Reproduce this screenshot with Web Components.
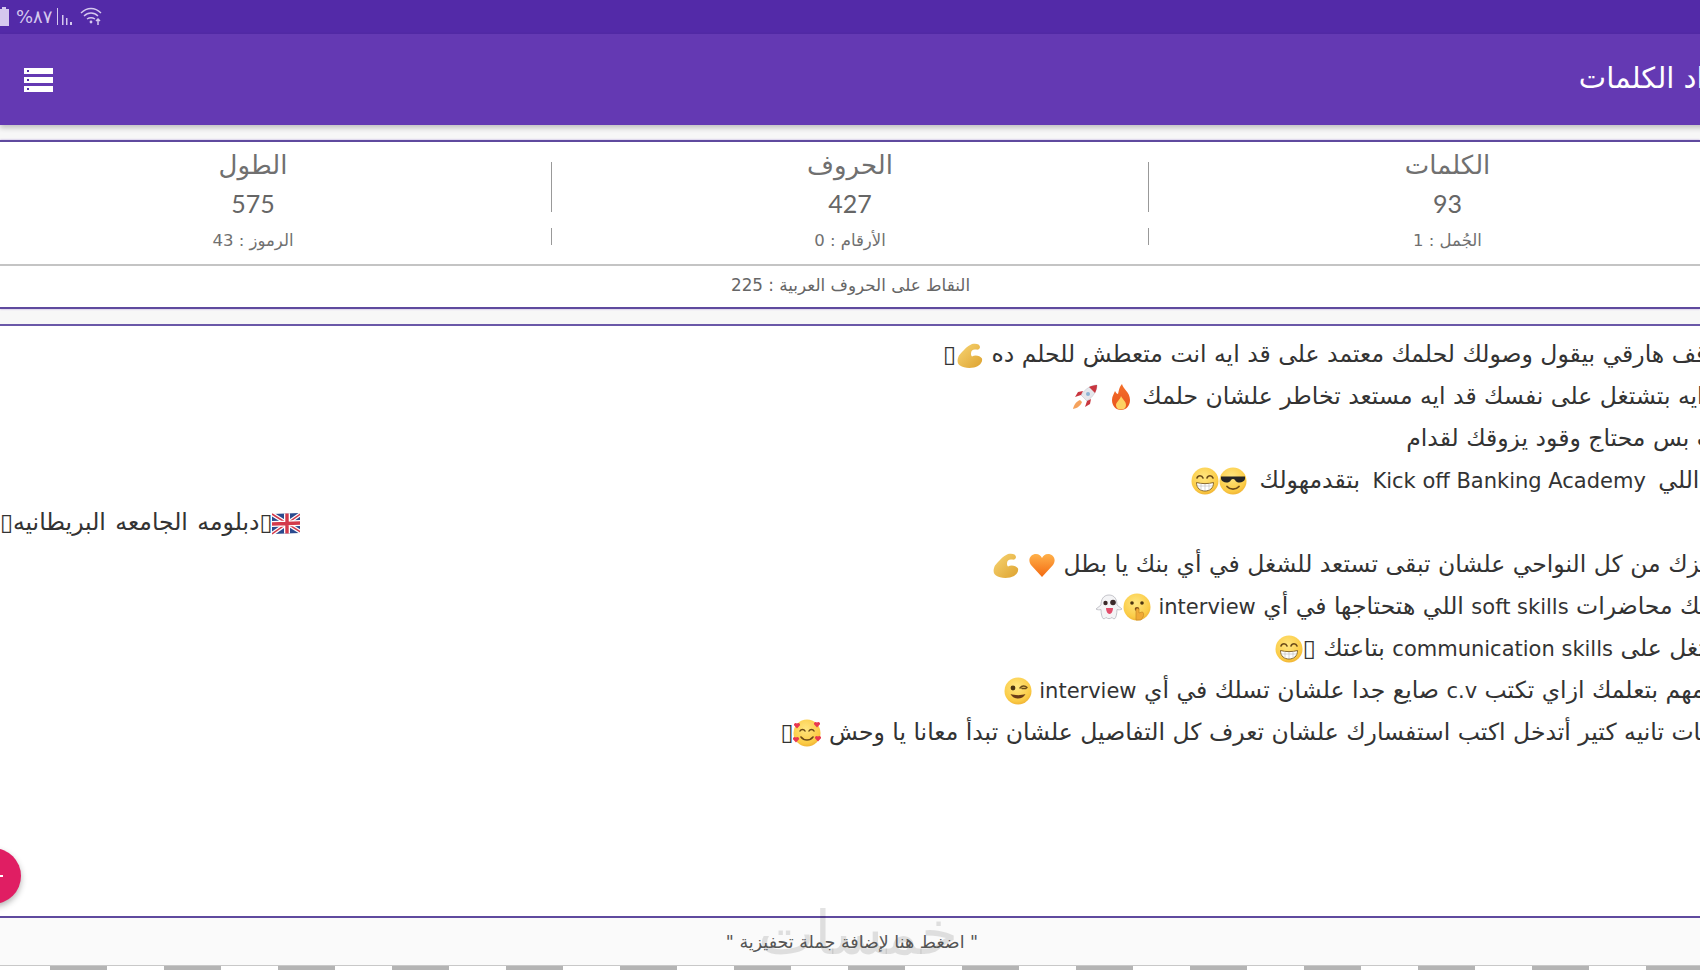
<!DOCTYPE html>
<html lang="ar">
<head>
<meta charset="utf-8">
<title>عداد الكلمات</title>
<style>
  html, body { margin: 0; padding: 0; background: #fff; }
  body { font-family: "DejaVu Sans", "Noto Sans", sans-serif; overflow: hidden; width: 1700px; height: 970px; }
</style>
</head>
<body>
<word-page>
  <status-bar slot="top"></status-bar>
  <app-bar slot="top">عداد الكلمات</app-bar>
  <stats-panel>
    <stat-cell title-text="الكلمات" value="93" sub="الجُمل : 1"></stat-cell>
    <stat-cell title-text="الحروف" value="427" sub="الأرقام : 0" divided></stat-cell>
    <stat-cell title-text="الطول" value="575" sub="الرموز : 43" divided></stat-cell>
    <span slot="dots">النقاط على الحروف العربية : 225</span>
  </stats-panel>
  <text-editor>
    <text-line style="--shift:14px">موقف هارقي بيقول وصولك لحلمك معتمد على قد ايه انت متعطش للحلم ده <app-emoji name="muscle"></app-emoji>▯</text-line>
    <text-line style="--shift:-3px">وقد ايه بتشتغل على نفسك قد ايه مستعد تخاطر علشان حلمك <app-emoji name="fire"></app-emoji> <app-emoji name="rocket"></app-emoji></text-line>
    <text-line style="--shift:13px">انت بس محتاج وقود يزوقك لقدام</text-line>
    <text-line style="--shift:-1px;word-spacing:5px">وده اللي <span>Kick off Banking Academy</span> بتقدمهولك <app-emoji name="cool"></app-emoji><app-emoji name="grin"></app-emoji></text-line>
    <text-line start style="word-spacing:2px"><app-emoji name="flag"></app-emoji>▯دبلومه الجامعه البريطانيه▯</text-line>
    <text-line>هنجهزك من كل النواحي علشان تبقى تستعد للشغل في أي بنك يا بطل <app-emoji name="heart"></app-emoji> <app-emoji name="muscle"></app-emoji></text-line>
    <text-line>هنديلك محاضرات <span>soft skills</span> اللي هتحتاجها في أي <span>interview</span> <app-emoji name="shush"></app-emoji><app-emoji name="ghost"></app-emoji></text-line>
    <text-line>هنشتغل على <span>communication skills</span> بتاعتك ▯<app-emoji name="grin"></app-emoji></text-line>
    <text-line style="--shift:30px">ومهم بتعلمك ازاي تكتب <span>c.v</span> صايع جدا علشان تسلك في أي <span>interview</span> <app-emoji name="wink"></app-emoji></text-line>
    <text-line style="--shift:9px">حاجات تانيه كتير أتدخل اكتب استفسارك علشان تعرف كل التفاصيل علشان تبدأ معانا يا وحش <app-emoji name="love"></app-emoji>▯</text-line>
  </text-editor>
  <quote-footer>" اضغط هنا لإضافة جملة تحفيزية "</quote-footer>
  <add-fab slot="over"></add-fab>
</word-page>

<script>
// page shell: rows stacked top to bottom, the fab floats over them
customElements.define('word-page', class extends HTMLElement {
  constructor () {
    super()
    this.attachShadow({ mode: 'open' }).innerHTML = `
      <style>
        :host { display: flex; flex-direction: column; position: relative; width: 1700px; height: 970px; overflow: hidden; background: #f7f7f7; }
        .strip { height: 5px; flex: none; border-top: 1px solid #c8c8c8; box-sizing: border-box; background: linear-gradient(90deg, #b4b4b4 50%, #fff 50%) -64px 0 / 114px 100%; }
      </style>
      <slot name="top"></slot>
      <slot></slot>
      <div class="strip"></div>
      <slot name="over"></slot>`
  }
})

customElements.define('status-bar', class extends HTMLElement {
  constructor () {
    super()
    this.attachShadow({ mode: 'open' }).innerHTML = `
      <style>
        :host { display: flex; align-items: center; gap: 5px; height: 34px; flex: none; background: #532aa8; color: #d5c8ee; font-size: 18px; box-sizing: border-box; padding-bottom: 1px; }
        svg { display: block; }
        .pct { margin-left: 2px; }
      </style>
      <svg width="9" height="19" viewBox="0 0 9 19"><path d="M2 2h-2v17h9V2H6V0H2z" fill="#d5c8ee"/></svg>
      <span class="pct">%٨٧</span>
      <svg width="18" height="17" viewBox="0 0 18 17" fill="#d5c8ee"><rect x="0" y="0" width="1" height="17"/><rect x="5" y="7" width="1.500" height="10"/><rect x="9" y="10" width="1.500" height="7"/><rect x="13" y="14" width="2" height="3"/></svg>
      <svg width="24" height="19" viewBox="0 0 24 19" fill="none" stroke="#d5c8ee" stroke-width="1.400"><path d="M1 6c6-6 14-6 20 0M4 9c4-4 10-4 14 0M7 12c3-2 5-2 8 0"/><circle cx="11" cy="15" r="1.400" fill="#d5c8ee" stroke="none"/><path d="M18 18v-6M16 14l2-2 2 2" stroke-width="1.500"/></svg>`
  }
})

customElements.define('app-bar', class extends HTMLElement {
  constructor () {
    super()
    this.attachShadow({ mode: 'open' }).innerHTML = `
      <style>
        :host { display: flex; align-items: center; justify-content: space-between; flex: none; height: 91px; background: #6439b3; color: #fff; padding-left: 24px; margin-right: -37px; font-size: 29px; box-shadow: 0 3px 5px rgba(0,0,0,.22); position: relative; }
        .menu { display: flex; flex-direction: column; gap: 3px; }
        .menu i { display: block; width: 29px; height: 6px; background: #fff; position: relative; }
        .menu i::after { content: ""; position: absolute; left: 3px; top: 2px; width: 2px; height: 2px; background: #512da8; }
        .title { direction: rtl; padding-bottom: 4px; }
      </style>
      <div class="menu"><i></i><i></i><i></i></div>
      <div class="title"><slot></slot></div>`
  }
})

customElements.define('stats-panel', class extends HTMLElement {
  constructor () {
    super()
    this.attachShadow({ mode: 'open' }).innerHTML = `
      <style>
        :host { display: block; flex: none; margin-top: 15px; background: #fff; border-top: 2px solid #5f4a9e; border-bottom: 2px solid #5f4a9e; color: #707070; box-shadow: 0 0 2px rgba(103,58,183,.45); }
        .cells { display: grid; grid-template-columns: repeat(3, 597px); direction: rtl; margin-left: -45px; width: 1791px; height: 122px; }
        .dots { border-top: 2px solid #c4c4c4; height: 41px; box-sizing: content-box; display: flex; align-items: center; justify-content: center; margin-left: -45px; width: 1791px; direction: rtl; font-size: 16.800px; color: #666; }
        .dots div { margin-top: -4px; }
      </style>
      <div class="cells"><slot></slot></div>
      <div class="dots"><div><slot name="dots"></slot></div></div>`
  }
})

customElements.define('stat-cell', class extends HTMLElement {
  constructor () {
    super()
    const root = this.attachShadow({ mode: 'open' })
    root.innerHTML = `
      <style>
        :host { display: block; text-align: center; position: relative; }
        .main { height: 50px; margin-top: 20px; display: flex; flex-direction: column; align-items: center; justify-content: space-between; }
        :host([divided]) .main, :host([divided]) .sub { border-right: 1px solid #999; }
        .t { font-size: 26px; line-height: 24px; margin-top: -9px; }
        .v { font-family: Lato, "DejaVu Sans", sans-serif; font-weight: 400; color: #666; font-size: 25px; line-height: 28px; margin-bottom: -5px; }
        .sub { height: 17px; margin-top: 16px; font-size: 16.500px; line-height: 25px; }
      </style>
      <div class="main"><div class="t"></div><div class="v"></div></div>
      <div class="sub"></div>`
    root.querySelector('.t').textContent = this.getAttribute('title-text')
    root.querySelector('.v').textContent = this.getAttribute('value')
    root.querySelector('.sub').textContent = this.getAttribute('sub')
  }
})

customElements.define('text-editor', class extends HTMLElement {
  constructor () {
    super()
    this.attachShadow({ mode: 'open' }).innerHTML = `
      <style>
        :host { display: block; flex: 1; margin-top: 15px; background: #fff; border-top: 2px solid #6a58a8; border-bottom: 2px solid #5f4a9e; padding-top: 7px; overflow: hidden; color: #333; }
      </style>
      <slot></slot>`
  }
})

customElements.define('text-line', class extends HTMLElement {
  constructor () {
    super()
    this.attachShadow({ mode: 'open' }).innerHTML = `
      <style>
        :host { display: block; width: 1746px; height: 42px; line-height: 42px; direction: rtl; text-align: right; white-space: nowrap; font-size: 23.500px; box-sizing: border-box; padding-right: var(--shift, 0); }
        :host([start]) { text-align: left; }
        ::slotted(span) { font-size: 21px; word-spacing: 0; }
      </style>
      <slot></slot>`
  }
})

customElements.define('quote-footer', class extends HTMLElement {
  constructor () {
    super()
    this.attachShadow({ mode: 'open' }).innerHTML = `
      <style>
        :host { display: flex; flex: none; height: 47px; align-items: center; justify-content: center; position: relative; background: #fafafa; color: #555; font-size: 17.500px; direction: rtl; }
        .mark { position: absolute; left: 758px; top: -20px; font-size: 60px; line-height: 70px; color: rgba(0,0,0,.11); }
        .txt { position: relative; left: 2px; }
      </style>
      <div class="mark">خمسات</div>
      <span class="txt"><slot></slot></span>`
  }
})

customElements.define('add-fab', class extends HTMLElement {
  constructor () {
    super()
    this.attachShadow({ mode: 'open' }).innerHTML = `
      <style>
        :host { position: absolute; left: -35px; top: 848px; width: 56px; height: 56px; border-radius: 50%; background: #e01e63; box-shadow: 0 3px 6px rgba(0,0,0,.3); }
        i { position: absolute; left: 34px; top: 27px; width: 4px; height: 2px; background: #fff; }
      </style>
      <i></i>`
  }
})

// emoji drawings, real colour emoji fonts are not there
const face = `<radialGradient id="f" cx=".45" cy=".35" r=".75"><stop offset="0" stop-color="#ffe680"/><stop offset=".7" stop-color="#fbcb45"/><stop offset="1" stop-color="#e9a52b"/></radialGradient><circle cx="14" cy="14" r="13.5" fill="url(#f)"/>`
const arcEyes = `<path d="M6 11c1-3 5-3 6 0M16 11c1-3 5-3 6 0" fill="none" stroke="#6b4a18" stroke-width="1.6" stroke-linecap="round"/>`
const hearts = [[4, 6], [24, 5], [3, 20], [25, 19]].map(([x, y]) => `<path d="M${x} ${y + 3.5}l-3-3.2a1.8 1.8 0 0 1 3-1.8 1.8 1.8 0 0 1 3 1.8z" fill="#e8384f"/>`).join('')
const EMOJI = {
  grin: `${face}${arcEyes}<path d="M5.5 15.5c5 1.5 12 1.5 17 0 0 6-4 8.500-8.500 8.500s-8.500-2.500-8.500-8.500z" fill="#fff" stroke="#7a5a20" stroke-width=".9"/><path d="M6 19h16M10 16.500v7M14 17v7M18 16.500v7" stroke="#bbb" stroke-width=".6"/>`,
  cool: `${face}<path d="M2 9.500h24v2.500c-1 4-8 5-10 1-1-1.200-3-1.200-4 0-2 4-9 3-10-1z" fill="#262626"/><path d="M8 19.500c3 3.500 9 3.500 12 0" fill="none" stroke="#6b4a18" stroke-width="1.700" stroke-linecap="round"/>`,
  wink: `${face}<circle cx="9" cy="11" r="2.400" fill="#4a3312"/><path d="M16 11c2-2.500 5-2.500 7-.5M18 11.500h4" fill="none" stroke="#6b4a18" stroke-width="1.500" stroke-linecap="round"/><path d="M6.500 17c3 6 12 6 15 0-4 1.500-11 1.500-15 0z" fill="#6b3c17"/>`,
  love: `${face}<path d="M7 12c1-2 4-2 5 0M16 12c1-2 4-2 5 0" fill="none" stroke="#6b4a18" stroke-width="1.500" stroke-linecap="round"/><path d="M8 18c3 4 9 4 12 0" fill="none" stroke="#6b4a18" stroke-width="1.600" stroke-linecap="round"/>${hearts}`,
  shush: `${face}<circle cx="9" cy="10" r="1.800" fill="#4a3312"/><circle cx="19" cy="10" r="1.800" fill="#4a3312"/><ellipse cx="14" cy="16" rx="2.300" ry="2" fill="#7a4a17"/><path d="M13 27V17c0-2 3-2 3 0v3l3-1c2 0 2 3 1 5l-2 3z" fill="#f0aa36" stroke="#c98a26" stroke-width=".7"/>`,
  ghost: `<path d="M14 2c-6 0-8 5-8 10l-5 4c1 1 4 1 5 .5 0 4 1 8 2 9 1.500 1 3-1 3-1 2 1.500 4 1.500 6 0 0 0 1.500 2 3 1 1-1 2-5 2-9 1 .5 4 .5 5-.5l-5-4c0-5-2-10-8-10z" fill="#f4f4f6" stroke="#bdbdc4" stroke-width=".9"/><circle cx="10.500" cy="10" r="2.200" fill="#3b2a2a"/><circle cx="18" cy="9.500" r="2.800" fill="#3b2a2a"/><path d="M11 15h7c0 2-1 6-3.500 6S11 17 11 15z" fill="#e24c6a"/>`,
  heart: `<linearGradient id="h" x1="0" y1="0" x2="0" y2="1"><stop offset="0" stop-color="#ffb14a"/><stop offset="1" stop-color="#f36a12"/></linearGradient><path d="M14 26L3 14C-1 8 3 3 8 3c3 0 5 2 6 4 1-2 3-4 6-4 5 0 9 5 5 11z" fill="url(#h)"/>`,
  muscle: `<linearGradient id="m" x1="0" y1="0" x2="1" y2="1"><stop offset="0" stop-color="#f8d675"/><stop offset="1" stop-color="#dda22f"/></linearGradient><path d="M16 3c4-1 8 0 8 3 0 2-2 3-4 2.500-3-.5-5 1-5 4 0 1 0 2 1 3 3-2 8-1 10 2 1 4-3 8-8 9-6 1-11 0-14-2-3-2-3-6-1-10C7 10 11 5 16 3z" fill="url(#m)"/>`,
  fire: `<linearGradient id="b" x1="0" y1="0" x2="0" y2="1"><stop offset="0" stop-color="#f4702a"/><stop offset="1" stop-color="#e9531d"/></linearGradient><path d="M15 1c1 5 8 8 8 16 0 6-4 10-9 10S5 23 5 17c0-4 2-6 3-9 1 2 2 3 3 3 1-3 1-7 4-10z" fill="url(#b)"/><path d="M14 13c1 3 5 5 5 9 0 3-2 4.500-5 4.500S9 25 9 22c0-3 4-5 5-9z" fill="#fdd263"/>`,
  rocket: `<path d="M26 2c-6 0-12 4-16 10l6 6c6-4 10-10 10-16z" fill="#e6e6ea" stroke="#b9b9c2" stroke-width=".5"/><path d="M26 2c-3 0-6 1-8 2l6 6c1-2 2-5 2-8z" fill="#c8363f"/><path d="M10 12l-6 2 3-5 5-1zM16 18l-2 6 5-3 1-5z" fill="#c8363f"/><circle cx="17" cy="11" r="2" fill="#8db4d4"/><path d="M9 17l2 2c-1 3-4 6-9 7 1-5 4-8 7-9z" fill="#f5a25d"/>`,
  flag: `<g transform="skewY(-2)"><rect x="0" y="5" width="30" height="20" fill="#2b4a8e"/><path d="M0 5l30 20M30 5L0 25" stroke="#fff" stroke-width="4"/><path d="M0 5l30 20M30 5L0 25" stroke="#d33a4b" stroke-width="1.500"/><path d="M15 5v20M0 15h30" stroke="#fff" stroke-width="6"/><path d="M15 5v20M0 15h30" stroke="#d33a4b" stroke-width="3.400"/></g>`
}

customElements.define('app-emoji', class extends HTMLElement {
  constructor () {
    super()
    const name = this.getAttribute('name')
    this.attachShadow({ mode: 'open' }).innerHTML = `
      <style>
        :host { display: inline-block; width: 28px; height: 28px; vertical-align: -7px; line-height: 0; }
        svg { display: block; }
      </style>
      <svg width="28" height="28" viewBox="0 0 28 28">${EMOJI[name]}</svg>`
  }
})
</script>
</body>
</html>
